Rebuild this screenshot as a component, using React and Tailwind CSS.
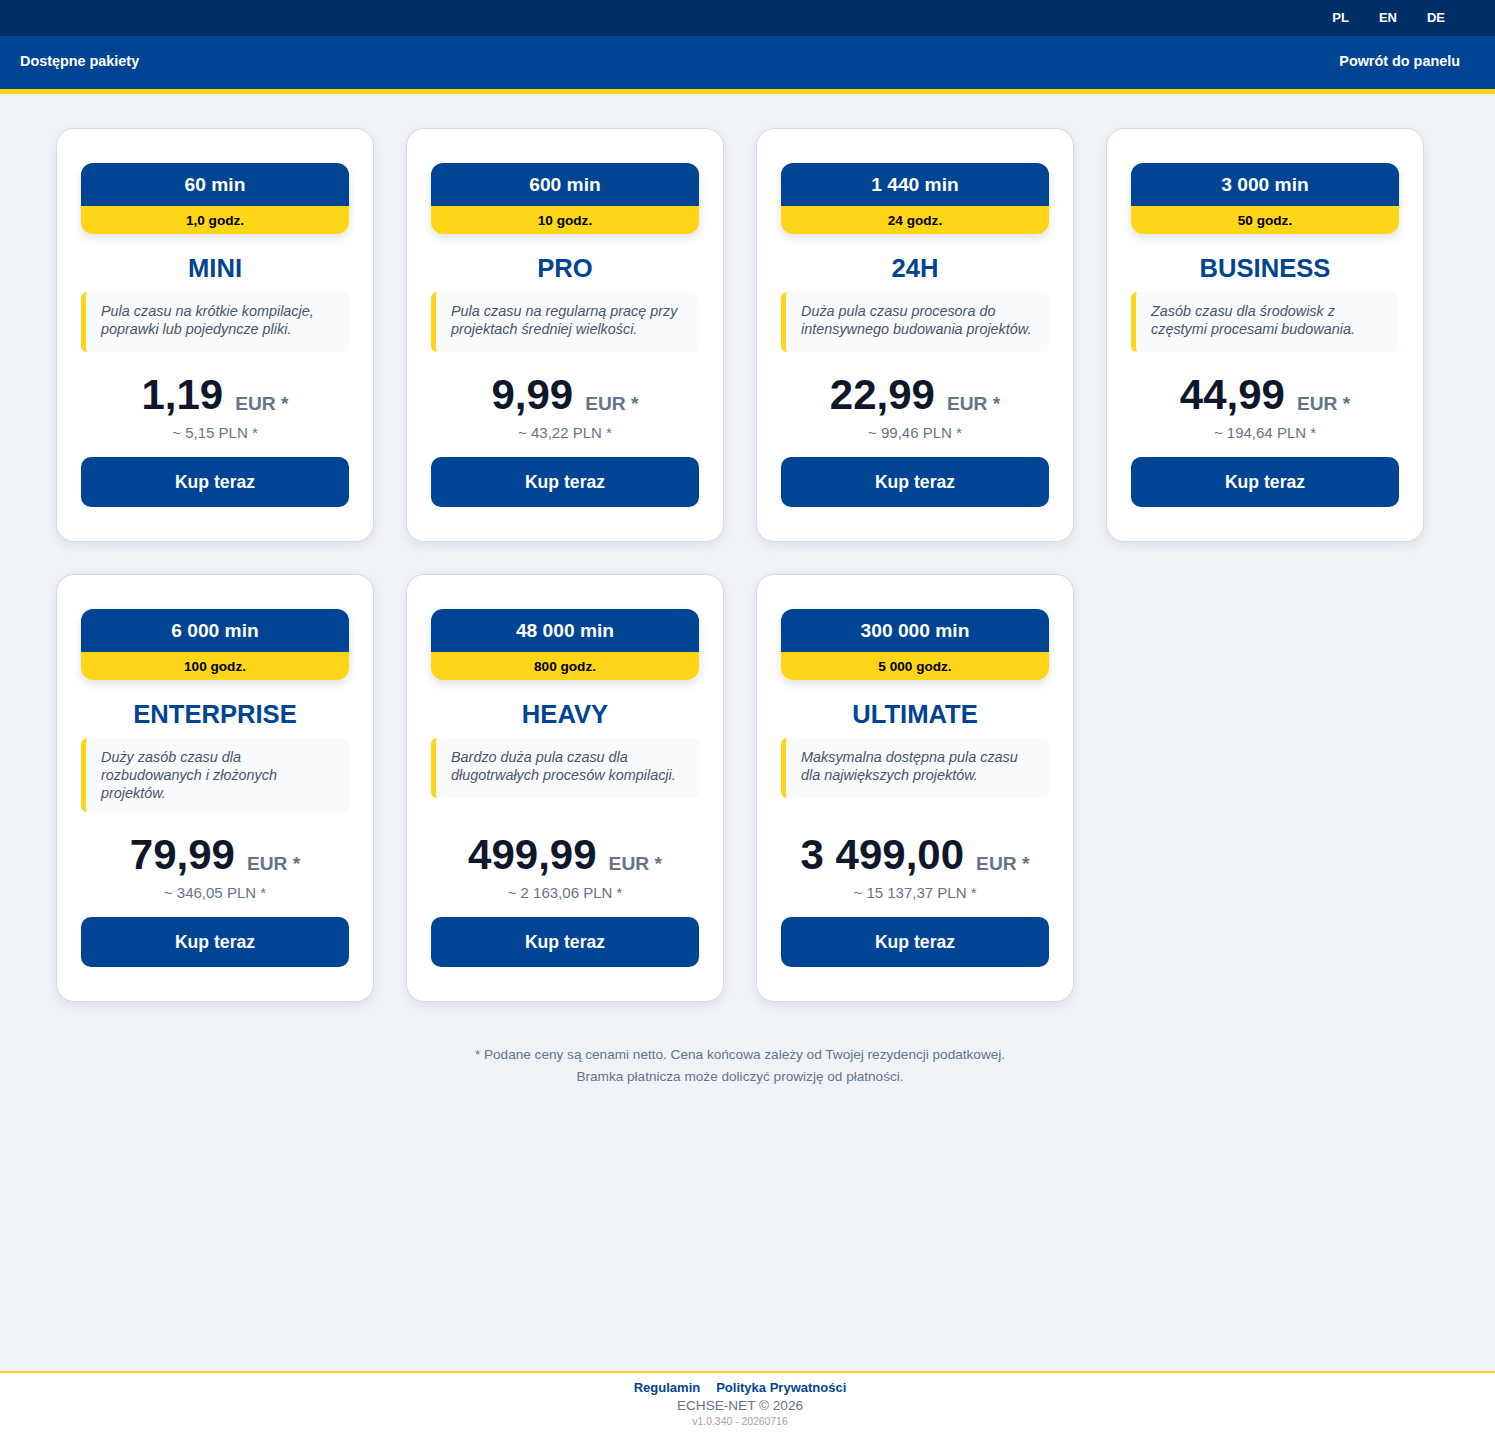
import React from "react";

const plans = [
  { min: "60 min", h: "1,0 godz.", name: "MINI", desc: "Pula czasu na krótkie kompilacje, poprawki lub pojedyncze pliki.", eur: "1,19", pln: "~ 5,15 PLN *" },
  { min: "600 min", h: "10 godz.", name: "PRO", desc: "Pula czasu na regularną pracę przy projektach średniej wielkości.", eur: "9,99", pln: "~ 43,22 PLN *" },
  { min: "1 440 min", h: "24 godz.", name: "24H", desc: "Duża pula czasu procesora do intensywnego budowania projektów.", eur: "22,99", pln: "~ 99,46 PLN *" },
  { min: "3 000 min", h: "50 godz.", name: "BUSINESS", desc: "Zasób czasu dla środowisk z częstymi procesami budowania.", eur: "44,99", pln: "~ 194,64 PLN *" },
  { min: "6 000 min", h: "100 godz.", name: "ENTERPRISE", desc: "Duży zasób czasu dla rozbudowanych i złożonych projektów.", eur: "79,99", pln: "~ 346,05 PLN *" },
  { min: "48 000 min", h: "800 godz.", name: "HEAVY", desc: "Bardzo duża pula czasu dla długotrwałych procesów kompilacji.", eur: "499,99", pln: "~ 2 163,06 PLN *" },
  { min: "300 000 min", h: "5 000 godz.", name: "ULTIMATE", desc: "Maksymalna dostępna pula czasu dla największych projektów.", eur: "3 499,00", pln: "~ 15 137,37 PLN *" },
];

function Card({ p }) {
  return (
    <div className="flex flex-col bg-white border border-[#d3dae3] rounded-[18px] shadow-[0_4px_12px_rgba(15,23,42,0.08)] px-6 py-[34px]">
      <div className="rounded-xl overflow-hidden shadow-[0_4px_10px_rgba(0,0,0,0.12)]">
        <div className="h-[43px] pt-px bg-[#004494] flex items-center justify-center text-white font-bold text-[19.2px]">{p.min}</div>
        <div className="h-[28px] pt-[2px] bg-[#ffd617] flex items-center justify-center text-black font-bold text-[13.6px]">{p.h}</div>
      </div>
      <div className="mt-[19px] mb-[9px] text-center text-[25.6px] leading-[30px] font-bold text-[#004494]">{p.name}</div>
      <div className="min-h-[60px] bg-[#f8fafc] border-l-[5px] border-[#ffd617] rounded-md pl-[15px] pr-[12px] py-[10px] text-[14.4px] leading-[18px] italic text-[#4a5568]">
        {p.desc}
      </div>
      <div className="mt-auto pt-[22px]">
        <div className="h-[42px] flex items-baseline justify-center">
          <span className="text-[42px] leading-[42px] font-bold text-[#0f172a]">{p.eur}</span>
          <span className="ml-3 relative top-px text-[19.2px] leading-[20px] font-bold text-[#64748b]">EUR *</span>
        </div>
      </div>
      <div className="mt-[7px] text-center text-[15px] leading-[20px] text-[#64748b]">{p.pln}</div>
      <button className="mt-[14px] h-[50px] rounded-[10px] bg-[#004494] text-white font-bold text-[17.6px]">Kup teraz</button>
    </div>
  );
}

export default function App() {
  return (
    <div className="min-h-screen flex flex-col bg-[#eff3f8]" style={{ fontFamily: '"Liberation Sans", Arial, sans-serif' }}>
      <div className="bg-[#002f67] h-9">
        <div className="w-[1480px] h-full flex items-center justify-end pr-5">
          {["PL", "EN", "DE"].map((l) => (
            <a key={l} className="px-[15px] text-white font-bold text-[13px]">{l}</a>
          ))}
        </div>
      </div>
      <div className="bg-[#004494] border-b-[5px] border-[#ffd617]">
        <div className="w-[1480px] h-[53px] pb-px flex items-center justify-between px-5">
          <span className="text-white font-bold text-[14.4px]">Dostępne pakiety</span>
          <span className="text-white font-bold text-[14.4px]">Powrót do panelu</span>
        </div>
      </div>
      <main className="flex-1 w-[1480px] pt-[34px]">
        <div className="grid grid-cols-[repeat(4,318px)] gap-8 justify-center">
          {plans.map((p) => (
            <Card key={p.name} p={p} />
          ))}
        </div>
        <div className="mt-[42px] text-center text-[13.6px] leading-[22px] text-[#64748b]">
          <p>* Podane ceny są cenami netto. Cena końcowa zależy od Twojej rezydencji podatkowej.</p>
          <p>Bramka płatnicza może doliczyć prowizję od płatności.</p>
        </div>
      </main>
      <footer className="bg-white border-t-2 border-[#ffd617]">
        <div className="w-[1480px] pt-[6px] pb-2 text-center">
          <div className="flex justify-center gap-4 text-[13px] leading-[18px] font-bold text-[#004494]">
            <a>Regulamin</a>
            <a>Polityka Prywatności</a>
          </div>
          <div className="text-[13.6px] leading-[18px] text-[#64748b]">ECHSE-NET © 2026</div>
          <div className="text-[10.4px] leading-[14px] text-[#9ca3af]">v1.0.340 - 20260716</div>
        </div>
      </footer>
    </div>
  );
}
